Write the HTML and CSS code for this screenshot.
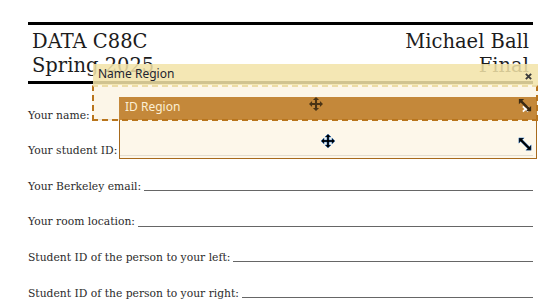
FILE: index.html
```html
<!DOCTYPE html>
<html>
<head>
<meta charset="utf-8">
<link rel="stylesheet" href="styles.css">
</head>
<body>
<div class="page">
  <header class="head">
    <div class="col">
      <div>DATA C88C</div>
      <div>Spring 2025</div>
    </div>
    <div class="col right">
      <div>Michael Ball</div>
      <div>Final</div>
    </div>
  </header>
  <div class="fields">
    <div class="row"><span class="label">Your name:</span><span class="fill"></span></div>
    <div class="row"><span class="label">Your student ID:</span><span class="fill"></span></div>
    <div class="row"><span class="label">Your Berkeley email:</span><span class="fill"></span></div>
    <div class="row"><span class="label">Your room location:</span><span class="fill"></span></div>
    <div class="row"><span class="label">Student ID of the person to your left:</span><span class="fill"></span></div>
    <div class="row"><span class="label">Student ID of the person to your right:</span><span class="fill"></span></div>
  </div>
</div>

<div class="name-fill"></div>
<div class="name-title">
  <span>Name Region</span>
  <svg class="close" viewBox="0 0 8 8"><path d="M1 1 L7 7 M7 1 L1 7" /></svg>
</div>

<div class="id-dialog">
  <div class="id-title">
    <span>ID Region</span>
    <svg class="ico move t-move" viewBox="0 0 16 16"><path d="M8 0 L11.5 3.5 H9.2 V6.8 H12.5 V4.5 L16 8 L12.5 11.5 V9.2 H9.2 V12.5 H11.5 L8 16 L4.5 12.5 H6.8 V9.2 H3.5 V11.5 L0 8 L3.5 4.5 V6.8 H6.8 V3.5 H4.5 Z"/></svg>
    <svg class="ico t-x" viewBox="0 0 8 8"><path d="M1 1 L7 7 M7 1 L1 7" /></svg>
    <svg class="ico resize t-resize" viewBox="0 0 16 16"><path d="M1 1 H7 L5 3 L13 11 L15 9 V15 H9 L11 13 L3 5 L1 7 Z"/></svg>
  </div>
  <div class="id-body">
    <svg class="ico move b-move" viewBox="0 0 16 16"><path d="M8 0 L11.5 3.5 H9.2 V6.8 H12.5 V4.5 L16 8 L12.5 11.5 V9.2 H9.2 V12.5 H11.5 L8 16 L4.5 12.5 H6.8 V9.2 H3.5 V11.5 L0 8 L3.5 4.5 V6.8 H6.8 V3.5 H4.5 Z"/></svg>
    <svg class="ico resize b-resize" viewBox="0 0 16 16"><path d="M1 1 H7 L5 3 L13 11 L15 9 V15 H9 L11 13 L3 5 L1 7 Z"/></svg>
  </div>
</div>

<div class="name-outline"></div>
</body>
</html>
```

FILE: styles.css
```css
html, body {
  margin: 0;
  padding: 0;
  background: #ffffff;
}

body {
  width: 550px;
  height: 306px;
  overflow: hidden;
  position: relative;
  font-family: "DejaVu Serif", serif;
  color: #2b2b2b;
}

.page {
  margin-left: 28px;
  width: 505px;
  padding-top: 22px;
}

.head {
  display: flex;
  justify-content: space-between;
  border-top: 3px solid #000;
  border-bottom: 3px solid #000;
  padding: 5px 4px 3px 4px;
  font-size: 19.5px;
  line-height: 24px;
  color: #1c1c1c;
}

.col.right {
  text-align: right;
}

.fields {
  display: flex;
  flex-direction: column;
  gap: 21.55px;
  margin-top: 24.8px;
}

.row {
  display: flex;
  align-items: flex-end;
  font-size: 10.75px;
  line-height: 14px;
  height: 14px;
}

.label {
  white-space: nowrap;
}

.fill {
  flex: 1;
  margin-left: 3px;
  margin-bottom: 2.5px;
  border-bottom: 1px solid #666;
}

/* Name region overlay */
.name-fill {
  position: absolute;
  left: 92px;
  top: 85px;
  width: 446px;
  height: 36px;
  background: rgba(252, 245, 229, 0.88);
  z-index: 1;
}

.name-title {
  position: absolute;
  left: 93px;
  top: 64px;
  width: 445px;
  height: 21px;
  box-sizing: border-box;
  padding-left: 5px;
  background: rgba(242, 227, 168, 0.86);
  font-family: "Noto Sans", sans-serif;
  font-size: 12px;
  line-height: 20px;
  color: #1e2430;
  z-index: 4;
}

.close {
  position: absolute;
  right: 6px;
  top: 9px;
  width: 7px;
  height: 7px;
  fill: none;
  stroke: #3b3b3b;
  stroke-width: 2.2;
}

.name-outline {
  position: absolute;
  left: 92px;
  top: 85px;
  width: 446px;
  height: 36px;
  box-sizing: border-box;
  border: 2px dashed #b9751c;
  border-top-color: #ecdca6;
  z-index: 3;
  pointer-events: none;
}

/* ID region overlay */
.id-dialog {
  position: absolute;
  left: 119px;
  top: 97px;
  width: 418px;
  z-index: 2;
  font-family: "Noto Sans", sans-serif;
}

.id-title {
  position: relative;
  height: 23px;
  box-sizing: border-box;
  padding-left: 6px;
  background: #c4883a;
  color: #fcefd4;
  font-size: 12px;
  line-height: 19px;
}

.id-body {
  position: relative;
  height: 39px;
  box-sizing: border-box;
  border: 1px solid #a76a1d;
  border-top: none;
  background: rgba(253, 246, 230, 0.84);
}

.ico {
  position: absolute;
  width: 14px;
  height: 14px;
}

.move path,
.resize path {
  stroke-linejoin: round;
}

.t-move {
  left: 190px;
  top: 0px;
  fill: #3e2c12;
  opacity: 0.9;
}

.t-x {
  left: 403px;
  top: 8px;
  width: 7px;
  height: 8px;
  fill: none;
  stroke: #ffffff;
  stroke-width: 2;
}

.t-resize {
  left: 399px;
  top: 1px;
  fill: #3a2a14;
}

.b-move {
  left: 201px;
  top: 14px;
  fill: #000;
}

.b-move path,
.b-resize path {
  stroke: #1a6fd0;
  stroke-width: 0.5;
}

.b-resize {
  left: 398px;
  top: 17px;
  fill: #000;
}
```
